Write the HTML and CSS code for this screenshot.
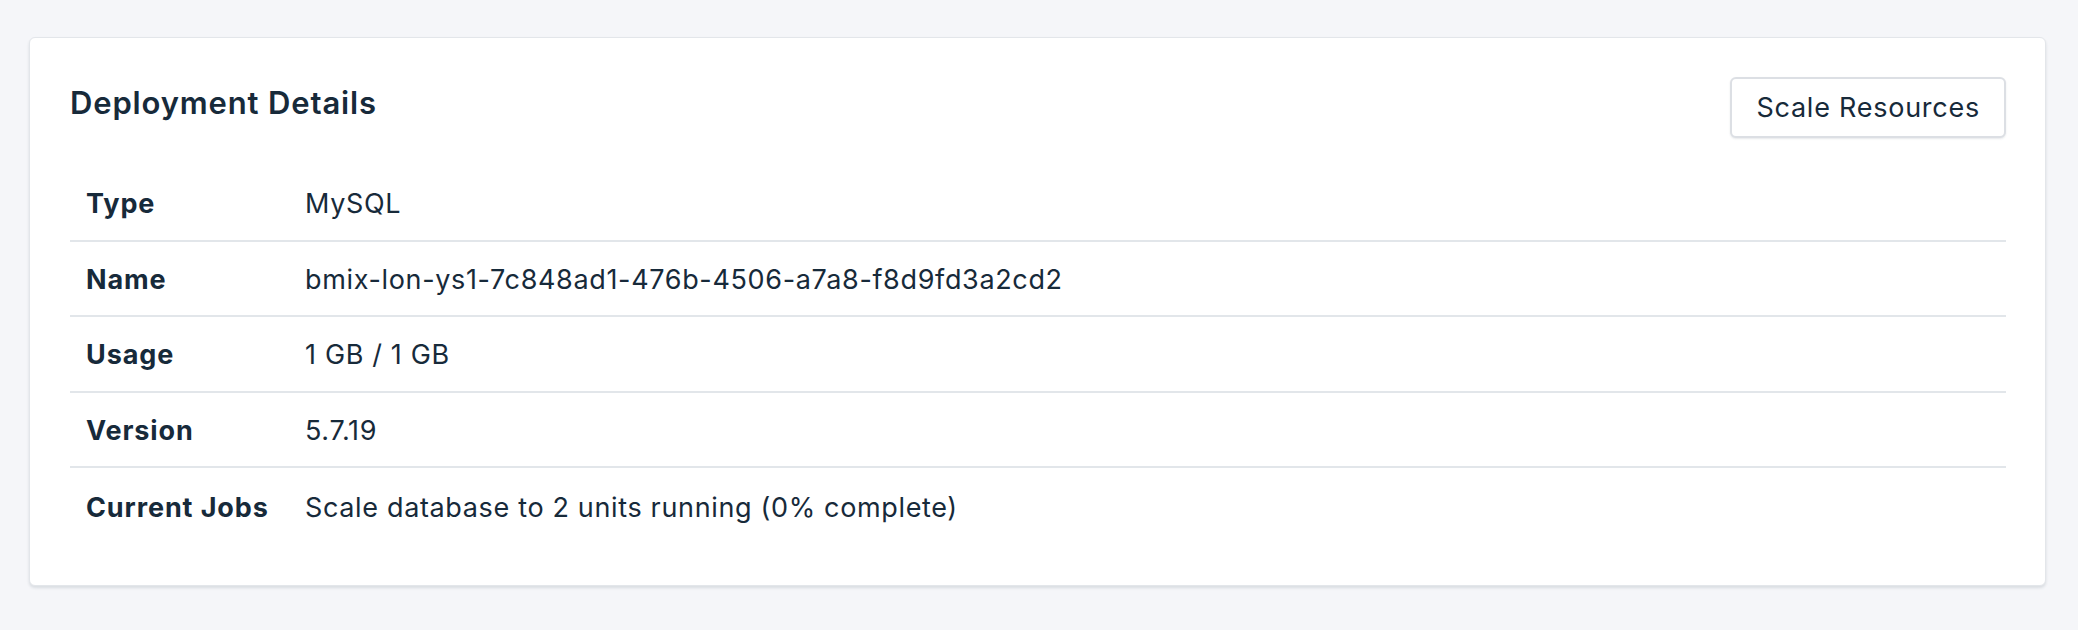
FILE: index.html
```html
<!DOCTYPE html>
<html lang="en">
<head>
<meta charset="utf-8">
<title>Deployment Details</title>
<link rel="stylesheet" href="styles.css">
</head>
<body>
<main class="page">
  <section class="card">
    <header class="card-header">
      <h2 class="card-title">Deployment Details</h2>
      <button class="btn" type="button">Scale Resources</button>
    </header>
    <table class="details">
      <tbody>
        <tr><th>Type</th><td>MySQL</td></tr>
        <tr><th>Name</th><td>bmix-lon-ys1-7c848ad1-476b-4506-a7a8-f8d9fd3a2cd2</td></tr>
        <tr><th>Usage</th><td>1 GB / 1 GB</td></tr>
        <tr><th>Version</th><td>5.7.19</td></tr>
        <tr><th>Current Jobs</th><td>Scale database to 2 units running (0% complete)</td></tr>
      </tbody>
    </table>
  </section>
</main>
</body>
</html>
```
FILE: styles.css
```css
html, body {
  margin: 0;
  padding: 0;
  background: #f5f6f9;
}
body {
  font-family: Inter, "Noto Sans", "Liberation Sans", sans-serif;
  color: #172a3a;
}
.page {
  padding: 37px 32px 40px 29px;
}
.card {
  background: #ffffff;
  border: 1px solid #e3e6ea;
  border-radius: 6px;
  box-shadow: 0 2px 3px rgba(20, 40, 60, 0.12);
  padding: 39px 39px 43px 40px;
}
.card-header {
  display: flex;
  justify-content: space-between;
  align-items: flex-start;
  margin-bottom: 28px;
}
.card-title {
  margin: 8px 0 0;
  font-size: 31px;
  line-height: 36px;
  font-weight: 600;
  letter-spacing: 0.85px;
}
.btn {
  font-family: inherit;
  font-size: 27px;
  line-height: 32px;
  letter-spacing: 0.75px;
  color: #172a3a;
  background: #fff;
  border: 2px solid #dcdfe4;
  border-radius: 6px;
  box-shadow: 0 1px 2px rgba(20, 40, 60, 0.1);
  padding: 13px 24px 12px;
  cursor: pointer;
}
.details {
  width: 100%;
  border-collapse: collapse;
  font-size: 27px;
  line-height: 37.5px;
  letter-spacing: 0.65px;
}
.details tr {
  border-bottom: 2px solid #e2e6ea;
}
.details tr:last-child {
  border-bottom: none;
}
.details th,
.details td {
  padding: 19px 0 17px;
  text-align: left;
  vertical-align: middle;
}
.details tr:last-child th,
.details tr:last-child td {
  padding-top: 21px;
  padding-bottom: 15px;
}
.details th {
  width: 219px;
  padding-left: 16px;
  font-weight: 700;
  letter-spacing: 0.9px;
}
.details td {
  font-weight: 400;
}
```
